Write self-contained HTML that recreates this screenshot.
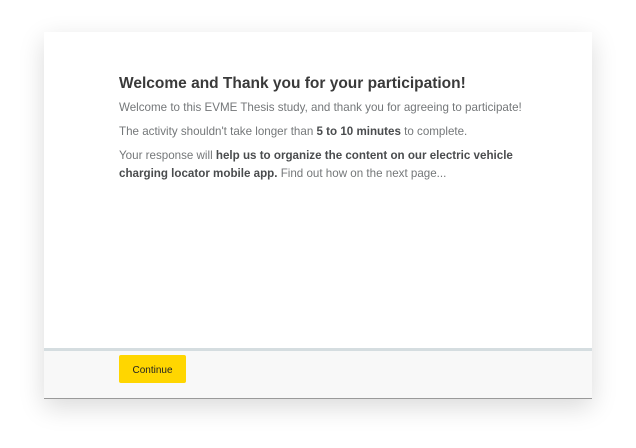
<!DOCTYPE html>
<html><head><style>
body{margin:0;width:636px;height:448px;background:#fff;font-family:"Liberation Sans",sans-serif;overflow:hidden;position:relative}
.card{position:absolute;left:44px;top:32px;width:548px;height:367px;background:#fff;box-shadow:0 8px 24px rgba(0,0,0,0.15);border-bottom:1px solid #9a9a9a;box-sizing:border-box}
h1{position:absolute;left:75px;top:43px;margin:0;font-size:15.5px;font-weight:bold;color:#3a3a3a;white-space:nowrap}
p{position:absolute;left:75px;margin:0;font-size:11.6px;color:#747779;line-height:18px;white-space:nowrap}
b{color:#4a4c4e}
.sep{position:absolute;left:0;top:316px;width:548px;height:3px;background:#d5dde0}
.foot{position:absolute;left:0;top:319px;width:548px;height:47px;background:#f8f8f8}
.btn{position:absolute;left:75px;top:4px;width:67px;height:28px;background:#ffd600;border-radius:2px;font-size:10px;color:#222;text-align:center;line-height:32px}
</style></head><body>
<div class="card">
<h1>Welcome and Thank you for your participation!</h1>
<p style="top:67px">Welcome to this EVME Thesis study, and thank you for agreeing to participate!</p>
<p style="top:91px">The activity shouldn't take longer than <b>5 to 10 minutes</b> to complete.</p>
<p style="top:115px">Your response will <b>help us to organize the content on our electric vehicle</b><br><b>charging locator mobile app.</b> Find out how on the next page...</p>
<div class="sep"></div>
<div class="foot"><div class="btn">Continue</div></div>
</div>
</body></html>
